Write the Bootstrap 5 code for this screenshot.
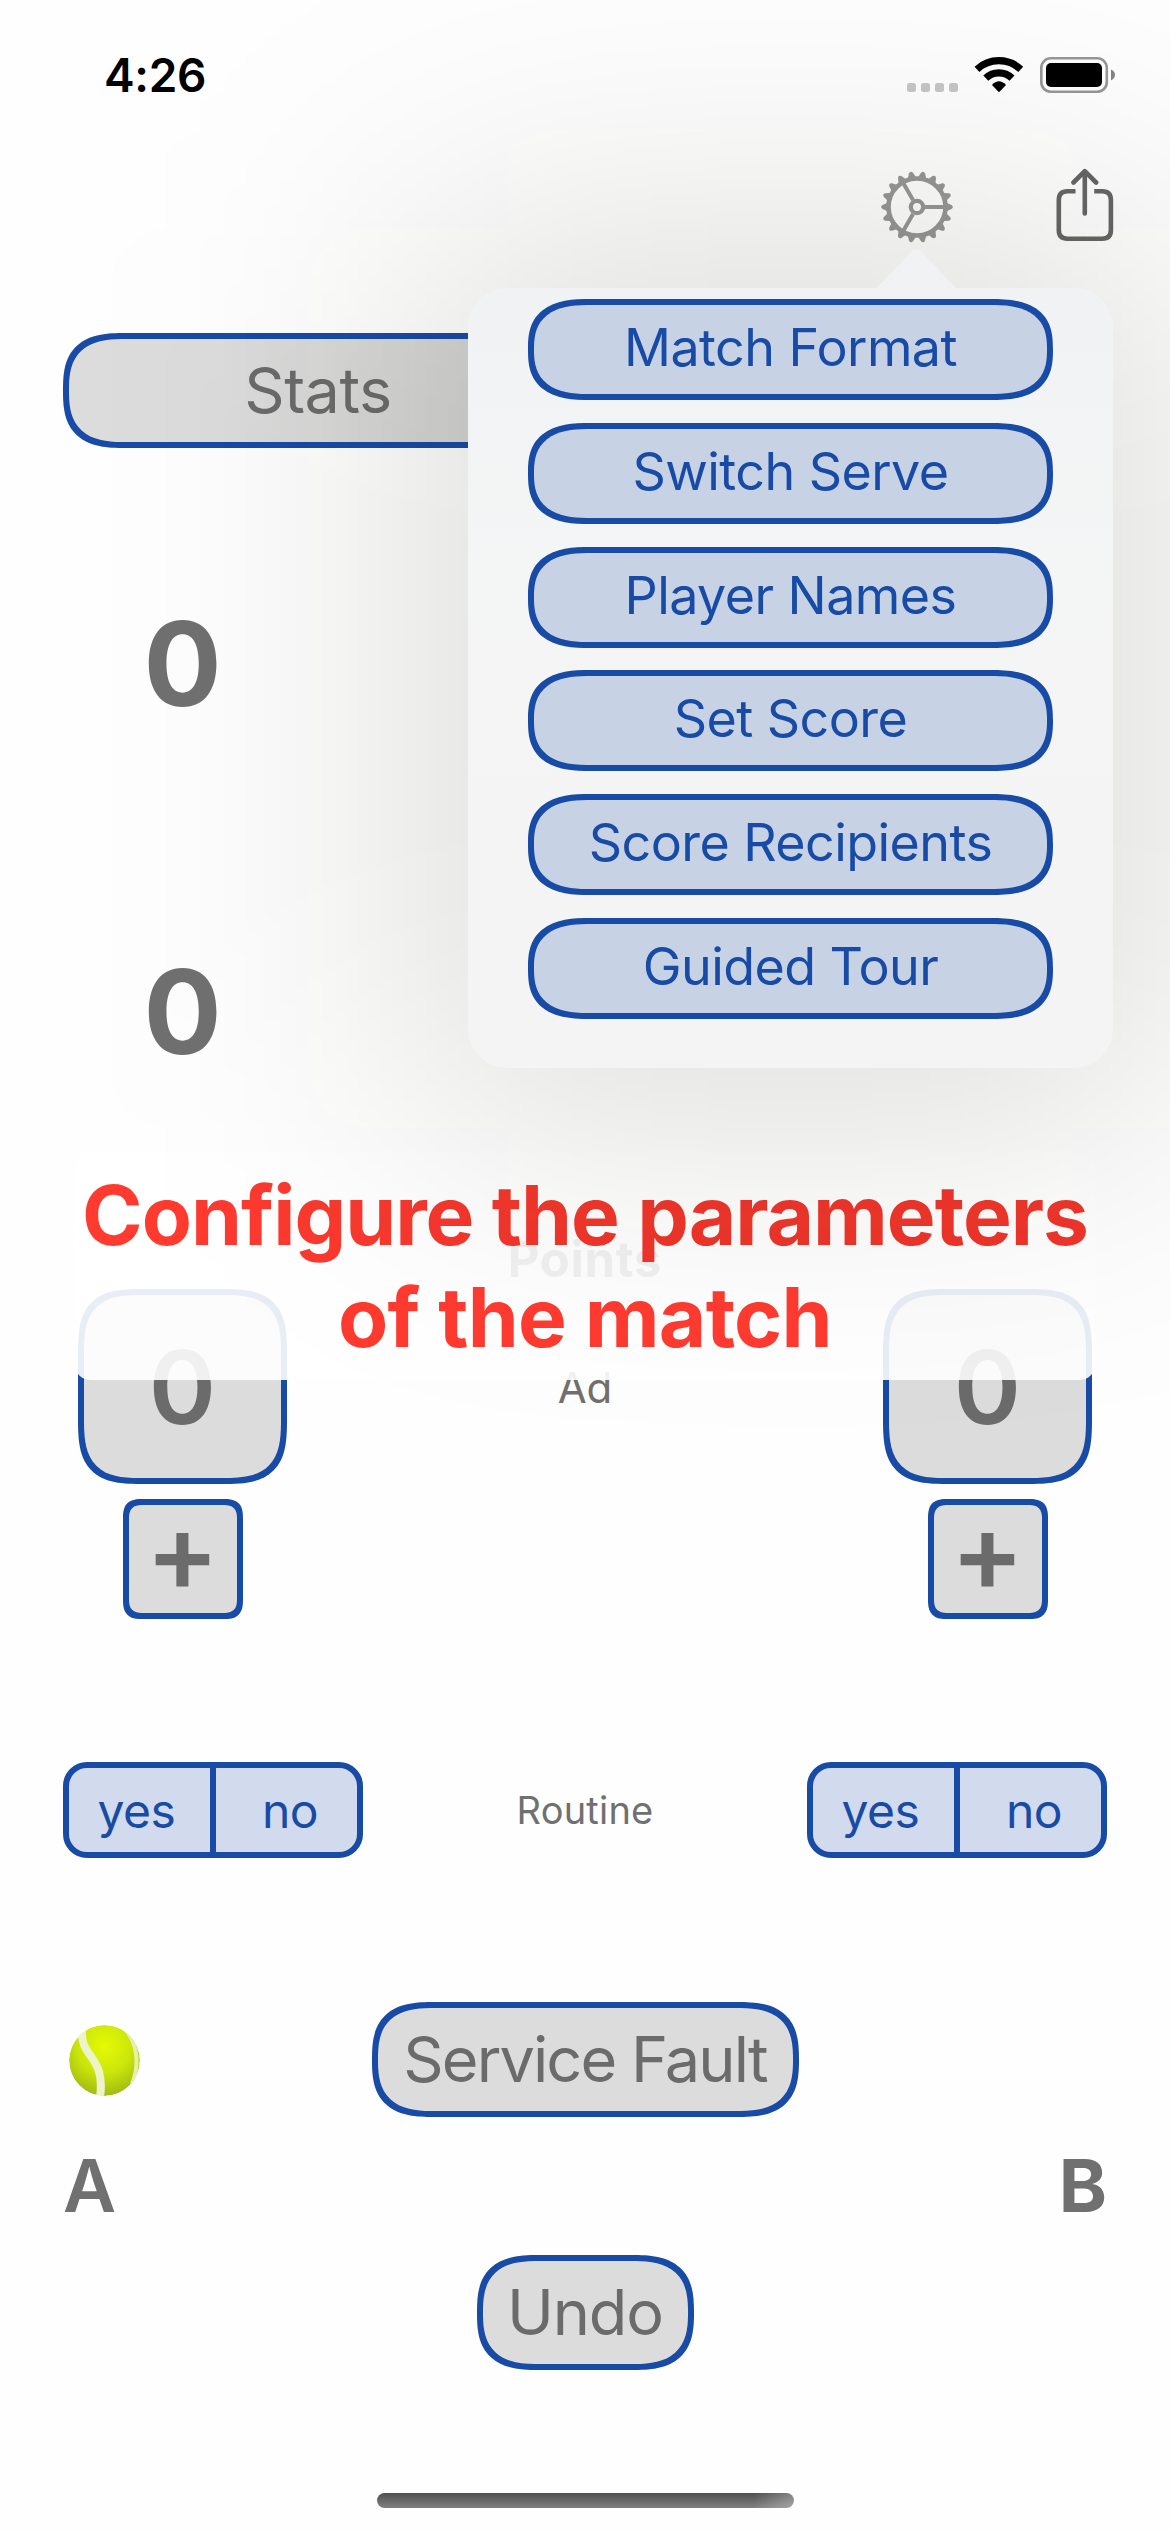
<!DOCTYPE html>
<html lang="en">
<head>
<meta charset="utf-8">
<meta name="viewport" content="width=device-width, initial-scale=1">
<title>Match Score</title>
<link href="https://cdn.jsdelivr.net/npm/bootstrap@5.3.0/dist/css/bootstrap.min.css" rel="stylesheet">
<style>
  :root { --ink-blue: #174ba6; --ink-gray: #6b6b6b; --fill-gray: #dcdcdc; }
  body { font-family: Inter, "Liberation Sans", sans-serif; background: #fff; color: #707070; }
  .screen { width: 1170px; height: 2532px; background: #fefefe; }
  .screen svg { display: block; flex: none; }

  .status-row { height: 149px; padding: 0 55px 0 104px; }
  .clock { font-size: 46px; font-weight: 600; letter-spacing: -.3px; line-height: 1; color: #000; }
  .tool-row { height: 116px; padding-right: 56px; gap: 102px; margin-bottom: 68px; }
  .side-pad { padding-left: 63px; padding-right: 63px; }
  .side-col { width: 239px; }

  .app-btn {
    --bs-btn-padding-x: 0; --bs-btn-padding-y: 0; --bs-btn-line-height: 1;
    --bs-btn-border-width: 6px; --bs-btn-border-color: var(--ink-blue);
    --bs-btn-bg: var(--fill-gray); --bs-btn-color: var(--ink-gray);
    --bs-btn-font-size: 63px;
    display: flex; align-items: center; justify-content: center;
    height: 115px; border-radius: 62px / 57px; corner-shape: superellipse(1.45); white-space: nowrap;
  }
  .stats-btn { width: 510px; letter-spacing: -.5px; background-image: linear-gradient(90deg, #dcdcdc 30%, #d4d4d3 80%); }
  .fault-btn { width: 427px; letter-spacing: -1.9px; }
  .undo-btn { width: 217px; letter-spacing: -1.1px; }
  .point-btn { width: 209px; height: 195px; font-size: 102px; font-weight: 600; border-radius: 66px; corner-shape: superellipse(1.6); }
  .plus-btn { width: 120px; height: 120px; font-size: 109px; font-weight: 600; padding-bottom: 15px; border-radius: 20px; corner-shape: superellipse(1.5); }

  .set-score { height: 166px; font-size: 116px; font-weight: 700; line-height: 1; color: #707070; }
  .points-title { height: 60px; font-size: 49px; font-weight: 700; letter-spacing: .7px; line-height: 1; }
  .ad-label { font-size: 42px; line-height: 1; padding-top: 3px; }
  .routine-label { font-size: 38px; letter-spacing: .2px; line-height: 1; }

  .yes-no { width: 300px; height: 96px; border: 6px solid var(--ink-blue); border-radius: 24px; background: #d2daed; overflow: hidden; }
  .yes-no .btn {
    --bs-btn-padding-x: 0; --bs-btn-padding-y: 0; --bs-btn-border-width: 0; --bs-btn-line-height: 1;
    --bs-btn-color: var(--ink-blue); --bs-btn-font-size: 48px; --bs-btn-border-radius: 0;
    letter-spacing: -.5px; width: 141px; padding: 2px 6px 0 0;
  }
  .yes-no .btn + .btn { width: 147px; padding: 2px 0 0 7px; border-left: 6px solid var(--ink-blue); }

  .player-row { height: 80px; font-size: 73px; line-height: 1; }
  .home-bar { width: 417px; height: 15px; border-radius: 8px; background: linear-gradient(100deg, transparent 90%, rgba(255,255,255,.3)), linear-gradient(#505050, #808080); }

  .tip { left: 75px; top: 1152px; width: 1020px; height: 228px; padding-top: 13px; border-radius: 15px;
         background: rgba(255,255,255,.9); color: #ff3b30; font-size: 82px; font-weight: 700; line-height: 102px; letter-spacing: -1.03px; }
  .tip-start { color: transparent; background: linear-gradient(90deg, #ff3b30 10%, #f0352b 55%); -webkit-background-clip: text; background-clip: text; }
  .tip-end { letter-spacing: -.75px; }

  .pop-shade { left: 408px; top: 228px; width: 765px; height: 900px; border-radius: 60px; background: rgba(12,12,0,.135); filter: blur(150px); pointer-events: none; }
  .settings-pop { left: 468px; top: 288px; width: 645px; height: 780px; border-radius: 39px; padding: 11px 60px 0;
                  background: linear-gradient(#f0f2f4, #f4f5f5 35%, #f4f4f4); }
  .pop-arrow { left: 405px; top: -39px; }
  .pop-list { gap: 22.8px; }
  .pop-btn { height: 101px; font-size: 52px; letter-spacing: -.57px; padding-bottom: 3px; border-radius: 62px / 50px; corner-shape: superellipse(1.4);
             --bs-btn-bg: #c7d2e5; --bs-btn-color: var(--ink-blue); }
</style>
</head>
<body>
<main class="screen position-relative overflow-hidden d-flex flex-column">

  <header class="status-row d-flex align-items-center justify-content-between">
    <div class="clock">4:26</div>
    <svg width="208" height="37" viewBox="907 55 208 37" aria-label="Status">
      <g fill="#c6c6c6"><rect x="907" y="82" width="9" height="9" rx="2.5"/><rect x="921" y="82" width="9" height="9" rx="2.5"/><rect x="935" y="82" width="9" height="9" rx="2.5"/><rect x="949" y="82" width="9" height="9" rx="2.5"/></g>
      <g fill="none" stroke="#000" stroke-width="7.2">
        <path d="M977 68.300A32 32 0 0 1 1020.700 68.300"/>
        <path d="M985.800 77.200A19 19 0 0 1 1012 77.200"/>
      </g>
      <path d="M992 84Q998.900 76.500 1006 84L999.800 90.500Q999 91.300 998.200 90.500Z"/>
      <rect x="1041.300" y="57.300" width="65.500" height="33.500" rx="9.500" fill="none" stroke="#979797" stroke-width="2.600"/>
      <rect x="1046" y="62" width="56" height="24" rx="5"/>
      <path d="M1111 68.500q4 1.800 4 5.300t-4 5.700z" fill="#858585"/>
    </svg>
  </header>

  <nav class="tool-row d-flex align-items-center justify-content-end">
    <svg width="74" height="74" viewBox="-37 -37 74 74" stroke="#979797" fill="none" aria-label="Settings">
      <circle r="28.500" stroke-width="4.600"/>
      <circle r="6.200" stroke-width="4.200"/>
      <path stroke-width="4" d="M8 0H27M-4 -6.930L-13.500 -23.400M-4 6.930L-13.500 23.400"/>
      <g fill="#979797" stroke="none" id="teeth"></g>
    </svg>
    <svg class="mb-1" width="58" height="74" viewBox="1056.500 168 58 74" stroke="#666" stroke-width="4.600" fill="none" aria-label="Share">
      <path d="M1076 191.300h-8q-8.700 0-8.700 8.700v30q0 8.700 8.700 8.700h34.700q8.700 0 8.700-8.700v-30q0-8.700-8.700-8.700h-8"/>
      <path stroke-linecap="round" stroke-linejoin="round" d="M1085.300 213.500V171.500M1074 182.500L1085.300 171.200L1096.600 182.500"/>
    </svg>
  </nav>

  <div class="side-pad"><button class="btn app-btn stats-btn">Stats</button></div>

  <section class="side-pad" style="margin-top:133px">
    <div class="side-col set-score d-flex align-items-center justify-content-center">0</div>
    <div class="side-col set-score d-flex align-items-center justify-content-center" style="margin-top:182px">0</div>
  </section>

  <section class="side-pad" style="margin-top:134px">
    <div class="points-title d-flex align-items-center justify-content-center">Points</div>
    <div class="d-flex align-items-center justify-content-between">
      <div class="side-col d-flex justify-content-center"><button class="btn app-btn point-btn">0</button></div>
      <div class="ad-label">Ad</div>
      <div class="side-col d-flex justify-content-center"><button class="btn app-btn point-btn">0</button></div>
    </div>
    <div class="d-flex justify-content-between" style="margin-top:15px">
      <div class="side-col d-flex justify-content-center"><button class="btn app-btn plus-btn">+</button></div>
      <div class="side-col d-flex justify-content-center"><button class="btn app-btn plus-btn">+</button></div>
    </div>
  </section>

  <section class="side-pad d-flex align-items-center justify-content-between" style="margin-top:143px">
    <div class="yes-no d-flex"><button class="btn">yes</button><button class="btn">no</button></div>
    <div class="routine-label">Routine</div>
    <div class="yes-no d-flex"><button class="btn">yes</button><button class="btn">no</button></div>
  </section>

  <section class="side-pad d-flex align-items-center justify-content-between" style="margin-top:144px">
    <svg width="83" height="72" viewBox="-6 0 83 72" aria-label="Serving">
      <defs>
        <radialGradient id="felt" cx=".5" cy=".3" r=".75"><stop offset="0" stop-color="#e4fb05"/><stop offset=".5" stop-color="#cbe60a"/><stop offset=".85" stop-color="#a9c312"/><stop offset="1" stop-color="#98b02a"/></radialGradient>
        <clipPath id="ball"><circle cx="35.500" cy="36.500" r="35.400"/></clipPath>
      </defs>
      <g clip-path="url(#ball)">
        <circle cx="35.500" cy="36.500" r="35.400" fill="url(#felt)"/>
        <path d="M13 6C11 34 37 32 31 73" fill="none" stroke="#eef3c8" stroke-width="8"/>
        <path d="M57 6C68 20 71 40 63 60" fill="none" stroke="#e6f0ac" stroke-width="4"/>
      </g>
    </svg>
    <button class="btn app-btn fault-btn">Service Fault</button>
    <div style="width:83px"></div>
  </section>

  <section class="side-pad player-row d-flex align-items-center justify-content-between" style="margin-top:28px">
    <span style="font-weight:600">A</span><span style="font-weight:700">B</span>
  </section>

  <div class="d-flex justify-content-center" style="margin-top:30px"><button class="btn app-btn undo-btn">Undo</button></div>
  <div class="d-flex justify-content-center" style="margin-top:123px"><div class="home-bar"></div></div>

  <div class="tip position-absolute text-center"><span class="tip-start">Configure the parameters</span><br><span class="tip-end">of the match</span></div>

  <div class="pop-shade position-absolute"></div>
  <div class="settings-pop position-absolute">
    <svg class="pop-arrow position-absolute" width="88" height="40" viewBox="0 0 88 40"><path fill="#f0f2f3" d="M0 40Q3.500 39 6.500 36L37.500 3.500Q43.500 -3 49.500 3.500L80 36Q83 39 87 40Z"/></svg>
    <div class="pop-list d-flex flex-column">
      <button class="btn app-btn pop-btn">Match Format</button>
      <button class="btn app-btn pop-btn">Switch Serve</button>
      <button class="btn app-btn pop-btn">Player Names</button>
      <button class="btn app-btn pop-btn">Set Score</button>
      <button class="btn app-btn pop-btn">Score Recipients</button>
      <button class="btn app-btn pop-btn">Guided Tour</button>
    </div>
  </div>
</main>
<script src="https://cdn.jsdelivr.net/npm/bootstrap@5.3.0/dist/js/bootstrap.bundle.min.js"></script>
<script>
  // Eighteen teeth, one every 20 degrees round the gear rim
  document.getElementById('teeth').innerHTML = Array.from({ length: 18 }, (_, i) =>
    `<path transform="rotate(${i * 20})" d="M30 -4L34.500 -2Q37.200 0 34.500 2L30 4Z"/>`).join('');
</script>
</body>
</html>
